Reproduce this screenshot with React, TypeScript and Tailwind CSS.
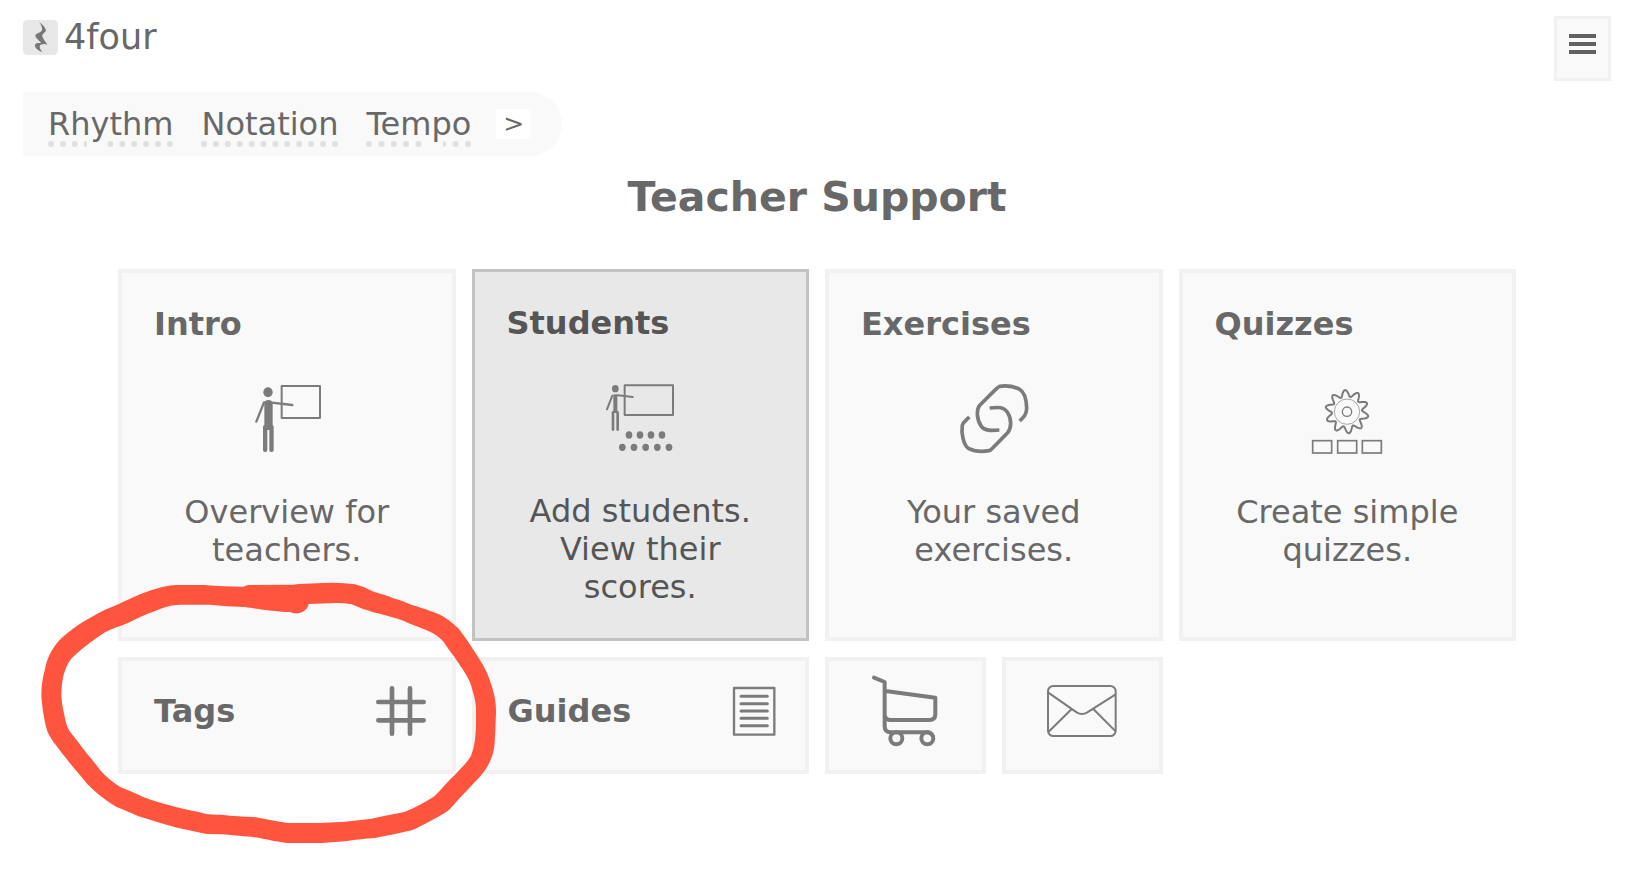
import React from 'react';

const GEAR_TEETH = 10;

const gearPoints = Array.from({ length: 180 }, (_, i) => {
  const angle = (i * 2 * Math.PI) / 180;
  const r = 55 + 10 * Math.cos(GEAR_TEETH * (angle + 1.66));
  return `${(105 + r * Math.cos(angle)).toFixed(1)},${(83 + r * Math.sin(angle)).toFixed(1)}`;
}).join(' ');

const Icon: React.FC<{ children: React.ReactNode }> = ({ children }) => (
  <svg
    viewBox="0 0 210 210"
    className="w-[70px] h-[70px] shrink-0 overflow-visible text-[#7b7b7b]"
    fill="none"
    stroke="currentColor"
    aria-hidden="true"
  >
    {children}
  </svg>
);

const IntroIcon = () => (
  <Icon>
    <g fill="currentColor" stroke="none">
      <ellipse cx="48" cy="25" rx="14" ry="15" />
      <path d="M37 56Q39 48 49 48Q62 48 62 60V138H37Z" />
      <rect x="33" y="123" width="13" height="81" rx="6" />
      <rect x="52" y="123" width="13" height="81" rx="6" />
    </g>
    <path d="M36 55L13 113M59 56L121 63" strokeWidth="7" strokeLinecap="round" />
    <rect x="89" y="6" width="115" height="96" strokeWidth="6" strokeLinejoin="round" />
  </Icon>
);

const StudentsIcon = () => (
  <Icon>
    <g fill="currentColor" stroke="none">
      <ellipse cx="31" cy="17" rx="10" ry="11" />
      <rect x="25" y="34" width="12" height="56" />
      <rect x="20" y="86" width="8" height="57" rx="2" />
      <rect x="34" y="86" width="8" height="57" rx="2" />
      {[72, 105, 138, 171].map(x => <ellipse key={x} cx={x} cy="156" rx="10" ry="11" />)}
      {[52, 87, 122, 157, 192].map(x => <ellipse key={x} cx={x} cy="193" rx="10" ry="11" />)}
    </g>
    <path d="M22 86H40" strokeWidth="5" />
    <path d="M22 38L6 79M38 37L83 42" strokeWidth="6" strokeLinecap="round" />
    <rect x="59" y="7" width="145" height="89" strokeWidth="6" strokeLinejoin="round" />
  </Icon>
);

const LinkIcon = () => (
  <Icon>
    <g strokeWidth="11" strokeLinejoin="round">
      <path d="M182 111C197 96 203 90 203 72C202 46 195 23 182 16C164 7 142 4 122 7Q116 10 110 16L63 63C51 76 53 108 67 127C78 141 94 140 121 138" />
      <path d="M92 72C119 69 135 68 146 86C159 108 157 132 146 146L98 195Q94 199 90 200C70 204 46 202 28 193C14 183 6 148 10 124C13 114 20 110 31 99" />
    </g>
  </Icon>
);

const QuizIcon = () => (
  <Icon>
    <polygon points={gearPoints} strokeWidth="6" strokeLinejoin="round" />
    <circle cx="105" cy="83" r="38" strokeWidth="2" />
    <circle cx="105" cy="83" r="14" strokeWidth="4" />
    {[2, 77, 151].map(x => <rect key={x} x={x} y="170" width="57" height="37" strokeWidth="5" />)}
  </Icon>
);

const HashIcon = () => (
  <Icon>
    <path d="M78 37V173M132 37V173M37 78H173M37 133H173" strokeWidth="14" strokeLinecap="round" />
  </Icon>
);

const GuideIcon = () => (
  <Icon>
    <rect x="45" y="36" width="121" height="140" strokeWidth="7" strokeLinejoin="round" />
    <path d="M66 61H145M66 83H145M66 105H145M66 127H145M66 149H145" strokeWidth="9" strokeLinecap="round" />
  </Icon>
);

const CartIcon = () => (
  <Icon>
    <g strokeWidth="12" strokeLinecap="round" strokeLinejoin="round">
      <path d="M12 5L44 18V150Q44 169 62 169H170Q183 169 188 180" />
      <path d="M46 45L196 65V114Q196 132 178 132H62Q48 132 45 122" />
      <circle cx="79" cy="187" r="18" />
      <circle cx="172" cy="187" r="18" />
    </g>
  </Icon>
);

const MailIcon = () => (
  <Icon>
    <g strokeWidth="6">
      <rect x="3" y="30" width="203" height="150" rx="16" />
      <path d="M4 50L89 109Q105 119 121 109L206 55M74 99L5 167M139 99L206 166" />
    </g>
  </Icon>
);

// hand drawn marker loop around the Tags tile
const MarkerLoop = () => (
  <svg
    viewBox="0 0 1440 870"
    className="absolute -left-[92px] -top-[92px] z-10 w-[480px] h-[290px] max-w-none pointer-events-none"
    fill="#ff553f"
    fillRule="evenodd"
    aria-hidden="true"
  >
    <path
      d="M440 48L520 48Q600 54 640 53Q650 47 660 48L790 47L805 45L880 42Q930 39 975 46Q1000 52 1028 67C1050 75 1065 77 1085 86C1110 92 1130 101 1148 109C1180 118 1200 126 1225 135C1250 147 1265 160 1284 177C1300 197 1320 225 1335 250C1355 280 1370 305 1380 335C1392 370 1398 395 1398 430C1397 460 1396 490 1394 520C1393 545 1385 570 1375 587C1365 607 1350 623 1337 637C1320 655 1300 675 1262 718C1245 735 1225 742 1200 757C1180 767 1165 776 1145 784C1110 793 1075 799 1035 807C1000 809 975 813 945 817L875 822L770 822C730 817 700 809 665 803C630 802 605 798 575 796L530 795C500 790 475 782 445 777C410 768 370 756 325 742C300 730 280 722 260 714C235 700 200 675 170 643C150 617 125 590 110 570C90 545 65 515 53 490C42 455 36 410 34 380C34 350 38 325 45 300C50 270 65 240 88 214C120 180 170 150 225 122L265 106C300 88 350 65 400 53Q420 48 440 48Z
      M450 107L540 107Q590 113 645 114C680 120 740 128 780 129C800 138 830 132 836 105L915 102Q940 101 965 106C990 118 1010 123 1030 130C1065 137 1095 148 1120 155C1145 168 1175 175 1197 187C1215 196 1230 206 1242 220C1255 242 1268 255 1277 270C1295 295 1310 318 1320 340C1330 370 1338 400 1338 420L1338 465C1337 500 1335 530 1323 560C1312 580 1295 595 1277 615C1255 635 1235 660 1215 680C1190 697 1150 718 1125 728C1095 735 1060 740 1025 749L945 758L870 762L775 762C740 758 705 750 670 744C640 743 610 741 575 737C550 737 535 736 525 734C490 725 455 720 430 712C395 702 365 695 340 684C315 672 295 665 272 655C250 640 230 625 212 605C190 575 165 550 145 520C130 500 115 485 109 465C102 435 95 405 94 380C95 350 98 320 107 300C115 280 122 270 132 261C160 235 195 210 225 190C250 177 270 172 295 161C320 150 345 135 370 128C395 118 420 107 450 107Z"
    />
  </svg>
);

const TOPICS = ['Rhythm', 'Notation', 'Tempo'];

const CARDS = [
  { title: 'Intro', text: 'Overview for teachers.', icon: <IntroIcon />, active: false },
  { title: 'Students', text: 'Add students. View their scores.', icon: <StudentsIcon />, active: true },
  { title: 'Exercises', text: 'Your saved exercises.', icon: <LinkIcon />, active: false },
  { title: 'Quizzes', text: 'Create simple quizzes.', icon: <QuizIcon />, active: false },
];

const App: React.FC = () => {
  return (
    <div className="min-h-screen bg-white pl-[23px] pr-[30px] pt-4 pb-8 font-['DejaVu_Sans',sans-serif] text-[#686868]">
      <header className="flex items-start justify-between">
        <a href="#home" className="flex items-center gap-1.5 text-[35px] leading-[42px]">
          <svg viewBox="0 0 105 105" className="w-[35px] h-[35px]" aria-hidden="true">
            <rect width="105" height="105" rx="14" fill="#e7e7e7" />
            <path
              d="M48 5C60 14 69 26 69 31C68 38 57 41 58 49C60 57 67 64 73 74C62 70 50 73 50 80C50 86 55 90 58 96C46 92 34 83 36 74C38 68 48 68 55 70C50 61 36 53 37 47C39 39 53 39 57 31C59 23 54 13 48 5Z"
              fill="#777"
            />
          </svg>
          4four
        </a>
        <button aria-label="Menu" className="w-[57px] h-[65px] flex justify-center border-[3px] border-[#f1f1f1] bg-[#f9f9f9] pt-[15px]">
          <svg viewBox="0 0 27 20" className="w-[27px] h-5" fill="#626262" aria-hidden="true">
            <path d="M0 0H27V4H0ZM0 8H27V12H0ZM0 16H27V20H0Z" />
          </svg>
        </button>
      </header>

      <nav className="mt-[11px] flex h-16 w-fit items-center rounded-r-full bg-[#f9f9f9] pl-[25px] pr-[31px] text-[32px] leading-[38px]">
        <div className="flex gap-7">
          {TOPICS.map(topic => (
            <a
              key={topic}
              href={`#${topic.toLowerCase()}`}
              className="underline decoration-dotted decoration-[#e0e0e0] decoration-[6px] underline-offset-[6px]"
            >
              {topic}
            </a>
          ))}
        </div>
        <button className="ml-[25px] h-[30px] w-[35px] bg-white text-[25px] leading-[30px]">&gt;</button>
      </nav>

      <main>
        <h1 className="mt-4 text-center text-[41px] leading-[50px] font-bold">Teacher Support</h1>

        <div className="mt-[47px] mx-[95px] grid grid-cols-8 gap-4">
          {CARDS.map(card => (
            <a
              key={card.title}
              href={`#${card.title.toLowerCase()}`}
              className={
                card.active
                  ? 'col-span-2 flex flex-col items-center border-[3px] border-[#c3c3c3] bg-[#e8e8e8] p-8 text-[#555]'
                  : 'col-span-2 flex flex-col items-center border-4 border-[#f1f1f1] bg-[#f9f9f9] p-8'
              }
            >
              <h2 className="self-start text-[32px] leading-[38px] font-bold">{card.title}</h2>
              <div className="mt-[41px] mb-[39px]">{card.icon}</div>
              <p className="text-center text-[32px] leading-[38px]">{card.text}</p>
            </a>
          ))}

          <a href="#tags" className="relative col-span-2 flex items-center justify-between border-4 border-[#f1f1f1] bg-[#f9f9f9] pt-[15px] pb-6 pl-8 pr-4">
            <h2 className="text-[32px] leading-[38px] font-bold">Tags</h2>
            <HashIcon />
            <MarkerLoop />
          </a>
          <a href="#guides" className="col-span-2 flex items-center justify-between border-4 border-[#f1f1f1] bg-[#f9f9f9] pt-[15px] pb-6 pl-8 pr-4">
            <h2 className="text-[32px] leading-[38px] font-bold">Guides</h2>
            <GuideIcon />
          </a>
          <a href="#shop" aria-label="Shop" className="flex justify-center border-4 border-[#f1f1f1] bg-[#f9f9f9] pt-[15px] pb-6">
            <CartIcon />
          </a>
          <a href="#contact" aria-label="Contact" className="flex justify-center border-4 border-[#f1f1f1] bg-[#f9f9f9] pt-[15px] pb-6">
            <MailIcon />
          </a>
        </div>
      </main>
    </div>
  );
};

export default App;
